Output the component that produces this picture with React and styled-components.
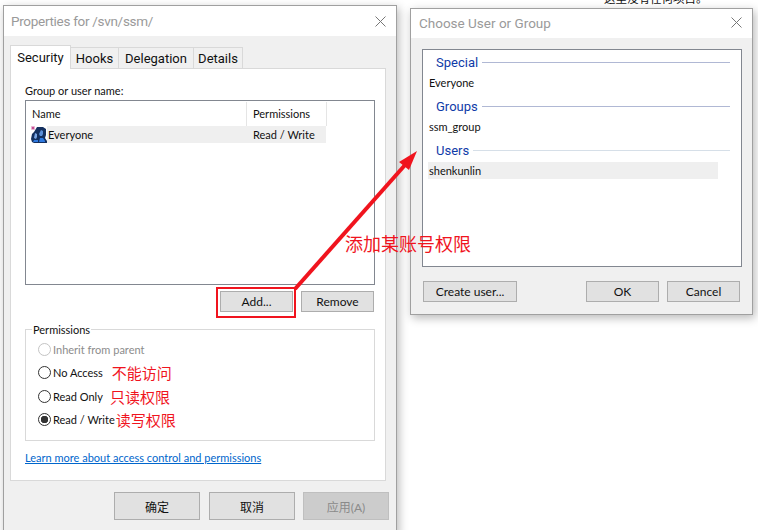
import React from "react";
import styled, { createGlobalStyle } from "styled-components";

const UI_FONT = `Lato, "Noto Sans CJK SC", sans-serif`;
const HEADING_FONT = `Roboto, "Noto Sans CJK SC", sans-serif`;
const RED = "#f0141e";

const GlobalStyle = createGlobalStyle`
  html, body {
    margin: 0;
    background: #ffffff;
    overflow: hidden;
  }
  * {
    box-sizing: border-box;
  }
`;

function CloseIcon() {
  return (
    <svg width="11" height="11" viewBox="0 0 11 11">
      <path d="M0.5 0.5L10.5 10.5M10.5 0.5L0.5 10.5" stroke="#777" strokeWidth="1" fill="none" />
    </svg>
  );
}

function UsersIcon() {
  return (
    <svg width="16" height="17" viewBox="0 0 16 17">
      <path d="M6 1h6l3 2v6l-1 3 2 3v2H3l-2-1-1-3 1-5 2-2z" fill="#14305f" />
      <path d="M10 4l2 1v3l-1 2H9L8 8z" fill="#5b8fd8" />
      <path d="M4 7l2 1v3l-1 2-2-1z" fill="#7aa6e4" />
      <path d="M3 14h4v2H2z" fill="#2e79e0" />
      <path d="M9 12h3l2 3v1H8z" fill="#2e79e0" />
      <path d="M0 2h4M2 0v4M.6.600l2.800 2.800M3.400.600L.6 3.400" stroke="#c2408c" strokeWidth=".8" />
    </svg>
  );
}

function Arrow() {
  return (
    <ArrowSvg width="758" height="530" viewBox="0 0 758 530">
      <line x1="295" y1="289" x2="405" y2="165" stroke={RED} strokeWidth="4" />
      <polygon points="417,151 399,162 409,170" fill={RED} />
    </ArrowSvg>
  );
}

export default function App() {
  return (
    <Desktop>
      <GlobalStyle />
      <BackText>这里没有任何项目。</BackText>

      <Dialog $left={3} $top={5} $width={394} $height={530}>
        <TitleBar $height={30} $inset={7} $lift={0}>
          <Title $tracking={-0.3}>Properties for /svn/ssm/</Title>
          <CloseIcon />
        </TitleBar>
        <DialogBody $padding="9px 7px 0 6px">
          <TabStrip>
            <Tab $active $width={61}>Security</Tab>
            <Tab $width={49}>Hooks</Tab>
            <Tab $width={76}>Delegation</Tab>
            <Tab $width={50}>Details</Tab>
          </TabStrip>
          <TabPanel>
            <FieldLabel>Group or user name:</FieldLabel>
            <ListBox $height={185} $padding="1px 0 0 1px">
              <ListHeader>
                <HeaderCell $width={219} $pad={4}>Name</HeaderCell>
                <HeaderCell $width={80} $pad={6}>Permissions</HeaderCell>
              </ListHeader>
              <ListRow>
                <RowIcon>
                  <UsersIcon />
                </RowIcon>
                <RowName>Everyone</RowName>
                <RowValue>Read / Write</RowValue>
              </ListRow>
            </ListBox>
            <ListActions>
              <Button $width={73} $height={21} $marked>Add...</Button>
              <Button $width={73} $height={21}>Remove</Button>
            </ListActions>
            <GroupBox>
              <GroupLegend>Permissions</GroupLegend>
              <RadioRow $height={24} $disabled>
                <Radio $disabled />
                Inherit from parent
              </RadioRow>
              <RadioRow $height={23}>
                <Radio />
                No Access
                <Note $gap={9}>不能访问</Note>
              </RadioRow>
              <RadioRow $height={25}>
                <Radio />
                Read Only
                <Note $gap={7}>只读权限</Note>
              </RadioRow>
              <RadioRow $height={21}>
                <Radio $checked />
                Read / Write
                <Note $gap={1}>读写权限</Note>
              </RadioRow>
            </GroupBox>
            <HelpLink href="#">Learn more about access control and permissions</HelpLink>
          </TabPanel>
          <Footer>
            <Button $width={86} $height={28} $after={9}>确定</Button>
            <Button $width={86} $height={28} $after={8}>取消</Button>
            <Button $width={86} $height={28} $disabled>应用(A)</Button>
          </Footer>
        </DialogBody>
      </Dialog>

      <Dialog $left={410} $top={8} $width={343} $height={307}>
        <TitleBar $height={29} $inset={8} $lift={2}>
          <Title>Choose User or Group</Title>
          <CloseIcon />
        </TitleBar>
        <DialogBody $padding="11px 10px 0 11px">
          <ListBox $height={218} $padding="1px 0 0 5px">
            <SectionHeading>Special</SectionHeading>
            <UserRow>Everyone</UserRow>
            <SectionHeading>Groups</SectionHeading>
            <UserRow>ssm_group</UserRow>
            <SectionHeading $faint>Users</SectionHeading>
            <UserRow $selected>shenkunlin</UserRow>
          </ListBox>
          <ChooserActions>
            <Button $width={94} $height={21}>Create user...</Button>
            <ActionGroup>
              <Button $width={73} $height={21}>OK</Button>
              <Button $width={73} $height={21}>Cancel</Button>
            </ActionGroup>
          </ChooserActions>
        </DialogBody>
      </Dialog>

      <Arrow />
      <ArrowLabel>添加某账号权限</ArrowLabel>
    </Desktop>
  );
}

const Desktop = styled.div`
  position: relative;
  width: 758px;
  height: 530px;
  overflow: hidden;
  background: #ffffff;
  font-family: ${UI_FONT};
  font-size: 11px;
  color: #111111;
`;

const BackText = styled.div`
  position: absolute;
  left: 604px;
  top: -9px;
  font-size: 11.500px;
  line-height: 16px;
  color: #111111;
`;

const Dialog = styled.div`
  position: absolute;
  left: ${(p) => p.$left}px;
  top: ${(p) => p.$top}px;
  width: ${(p) => p.$width}px;
  height: ${(p) => p.$height}px;
  display: flex;
  flex-direction: column;
  border: 1px solid #a0a0a0;
  background: #f0f0f0;
  box-shadow: 2px 3px 9px rgba(0, 0, 0, 0.28);
`;

const TitleBar = styled.div`
  height: ${(p) => p.$height}px;
  flex: none;
  display: flex;
  align-items: center;
  justify-content: space-between;
  padding: 0 10px ${(p) => p.$lift}px ${(p) => p.$inset}px;
  background: #ffffff;
`;

const Title = styled.div`
  font-family: ${HEADING_FONT};
  font-size: 13.500px;
  letter-spacing: ${(p) => p.$tracking || 0}px;
  color: #9a9a9a;
`;

const DialogBody = styled.div`
  flex: 1;
  display: flex;
  flex-direction: column;
  padding: ${(p) => p.$padding};
`;

const TabStrip = styled.div`
  display: flex;
  align-items: flex-end;
  height: 24px;
  position: relative;
  z-index: 1;
  margin-bottom: -1px;
`;

const Tab = styled.div`
  width: ${(p) => p.$width}px;
  height: ${(p) => (p.$active ? 24 : 22)}px;
  display: flex;
  align-items: center;
  justify-content: center;
  font-family: ${HEADING_FONT};
  font-size: 13px;
  background: ${(p) => (p.$active ? "#ffffff" : "#f0f0f0")};
  border: 1px solid #d9d9d9;
  border-bottom: ${(p) => (p.$active ? "none" : "1px solid #d9d9d9")};
  margin-left: ${(p) => (p.$active ? 0 : -1)}px;
`;

const TabPanel = styled.div`
  width: 376px;
  height: 413px;
  flex: none;
  display: flex;
  flex-direction: column;
  padding: 14px 10px 0 14px;
  background: #ffffff;
  border: 1px solid #d9d9d9;
`;

const FieldLabel = styled.div`
  height: 16px;
  line-height: 16px;
  margin-bottom: 1px;
`;

const ListBox = styled.div`
  height: ${(p) => p.$height}px;
  flex: none;
  padding: ${(p) => p.$padding};
  border: 1px solid #828790;
  background: #ffffff;
`;

const ListHeader = styled.div`
  display: flex;
  height: 24px;
  padding-left: 1px;
`;

const HeaderCell = styled.div`
  width: ${(p) => p.$width}px;
  display: flex;
  align-items: center;
  padding: 0 0 2px ${(p) => p.$pad}px;
  border-right: 1px solid #e5e5e5;
`;

const ListRow = styled.div`
  display: flex;
  align-items: center;
  height: 17px;
  width: 299px;
`;

const RowIcon = styled.div`
  width: 20px;
  height: 17px;
  flex: none;
  padding-left: 4px;
  background: #ffffff;
`;

const RowName = styled.div`
  width: 205px;
  height: 17px;
  line-height: 17px;
  padding-left: 1px;
  background: #efefef;
`;

const RowValue = styled.div`
  flex: 1;
  height: 17px;
  line-height: 17px;
  padding-left: 1px;
  background: #efefef;
`;

const ListActions = styled.div`
  display: flex;
  justify-content: flex-end;
  gap: 8px;
  margin: 6px 1px 0 0;
`;

const Button = styled.button`
  position: relative;
  width: ${(p) => p.$width}px;
  height: ${(p) => p.$height}px;
  padding: 0;
  margin-right: ${(p) => p.$after || 0}px;
  font-family: ${UI_FONT};
  font-size: 12px;
  color: ${(p) => (p.$disabled ? "#8a8a8a" : "#111111")};
  background: ${(p) => (p.$disabled ? "#cccccc" : "#e1e1e1")};
  border: 1px solid ${(p) => (p.$disabled ? "#bfbfbf" : "#adadad")};

  ${(p) =>
    p.$marked &&
    `&::after {
      content: "";
      box-sizing: border-box;
      position: absolute;
      left: -5px;
      top: -5px;
      width: 80px;
      height: 31px;
      border: 2px solid ${RED};
    }`}
`;

const GroupBox = styled.fieldset`
  margin: 10px 0 0;
  padding: 0 0 0 12px;
  height: 119px;
  flex: none;
  border: 1px solid #d9d9d9;
`;

const GroupLegend = styled.legend`
  margin-left: -6px;
  padding: 0 1px;
  line-height: 15px;
`;

const RadioRow = styled.div`
  display: flex;
  align-items: center;
  height: ${(p) => p.$height}px;
  color: ${(p) => (p.$disabled ? "#8c8c8c" : "#111111")};
`;

const Radio = styled.span`
  width: 13px;
  height: 13px;
  flex: none;
  margin-right: 2px;
  border-radius: 50%;
  background: ${(p) =>
    p.$checked ? "radial-gradient(circle, #333333 0 3.500px, #ffffff 4px)" : "#ffffff"};
  border: 1px solid ${(p) => (p.$disabled ? "#c4c4c4" : "#333333")};
`;

const Note = styled.span`
  margin-left: ${(p) => p.$gap}px;
  font-family: "Noto Sans CJK SC", sans-serif;
  font-size: 15px;
  line-height: 20px;
  color: ${RED};
`;

const HelpLink = styled.a`
  margin-top: 9px;
  line-height: 16px;
  color: #0066cc;
  text-decoration: underline;
`;

const Footer = styled.div`
  display: flex;
  justify-content: flex-end;
  margin-top: 11px;
`;

const SectionHeading = styled.div`
  display: flex;
  align-items: center;
  gap: 4px;
  height: 22px;
  padding: 0 11px 0 8px;
  font-family: ${HEADING_FONT};
  font-size: 13px;
  color: #0f3ba8;

  &::after {
    content: "";
    flex: 1;
    height: 1px;
    background: ${(p) => (p.$faint ? "#d6dfe8" : "#b0b8d4")};
  }
`;

const UserRow = styled.div`
  width: 290px;
  height: 17px;
  margin: 1px 0 4px;
  display: flex;
  align-items: center;
  padding-left: 1px;
  background: ${(p) => (p.$selected ? "#efefef" : "transparent")};
`;

const ChooserActions = styled.div`
  display: flex;
  justify-content: space-between;
  margin-top: 14px;
  padding: 0 2px 0 1px;
`;

const ActionGroup = styled.div`
  display: flex;
  gap: 8px;
`;

const ArrowSvg = styled.svg`
  position: absolute;
  left: 0;
  top: 0;
  pointer-events: none;
`;

const ArrowLabel = styled.div`
  position: absolute;
  left: 345px;
  top: 231px;
  font-family: "Noto Sans CJK SC", sans-serif;
  font-size: 18px;
  line-height: 24px;
  color: ${RED};
`;
